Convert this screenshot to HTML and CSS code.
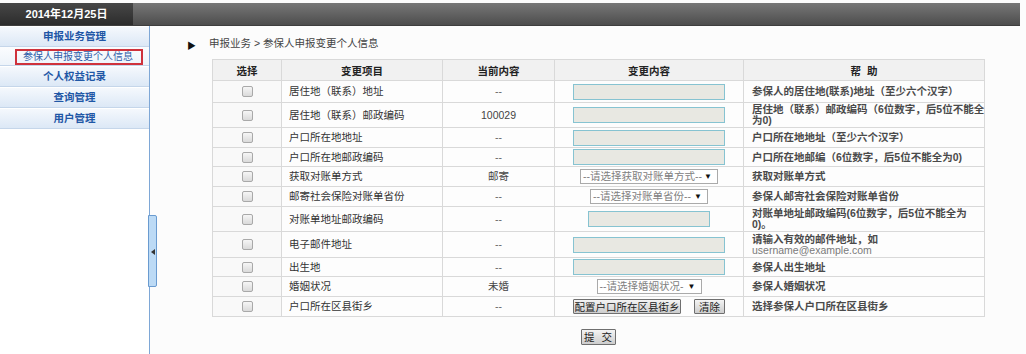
FILE: index.html
```html
<!DOCTYPE html>
<html lang="zh-CN">
<head>
<meta charset="utf-8">
<title>参保人申报变更个人信息</title>
<link rel="stylesheet" href="styles.css">
</head>
<body>
<div class="topbar">
  <div class="date">2014年12月25日</div>
  <div class="topfill"></div>
</div>
<div class="layout">
  <aside class="sidebar">
    <div class="menu-head">申报业务管理</div>
    <div class="menu-sub"><span class="sub-link">参保人申报变更个人信息</span></div>
    <div class="menu-head">个人权益记录</div>
    <div class="menu-head">查询管理</div>
    <div class="menu-head">用户管理</div>
    <div class="toggle"><span class="tri"></span></div>
  </aside>
  <main class="main">
    <div class="crumb"><span class="crumb-arrow">▶</span><span>申报业务 &gt; 参保人申报变更个人信息</span></div>
    <table class="grid">
      <colgroup>
        <col class="c1"><col class="c2"><col class="c3"><col class="c4"><col class="c5">
      </colgroup>
      <thead>
        <tr><th>选择</th><th>变更项目</th><th>当前内容</th><th>变更内容</th><th>帮&nbsp;&nbsp;助</th></tr>
      </thead>
      <tbody>
        <tr class="r22"><td class="chk"><input type="checkbox"></td><td class="item">居住地（联系）地址</td><td class="cur">--</td><td class="edit"><input class="txt" type="text"></td><td class="help">参保人的居住地(联系)地址（至少六个汉字）</td></tr>
        <tr class="r25"><td class="chk"><input type="checkbox"></td><td class="item">居住地（联系）邮政编码</td><td class="cur num">100029</td><td class="edit"><input class="txt" type="text"></td><td class="help">居住地（联系）邮政编码（6位数字，后5位不能全<br>为0)</td></tr>
        <tr><td class="chk"><input type="checkbox"></td><td class="item">户口所在地地址</td><td class="cur">--</td><td class="edit"><input class="txt" type="text"></td><td class="help">户口所在地地址（至少六个汉字）</td></tr>
        <tr class="r19"><td class="chk"><input type="checkbox"></td><td class="item">户口所在地邮政编码</td><td class="cur">--</td><td class="edit"><input class="txt" type="text"></td><td class="help">户口所在地邮编（6位数字，后5位不能全为0)</td></tr>
        <tr><td class="chk"><input type="checkbox"></td><td class="item">获取对账单方式</td><td class="cur num">邮寄</td><td class="edit"><span class="sel w1">--请选择获取对账单方式--<span class="arr">▼</span></span></td><td class="help">获取对账单方式</td></tr>
        <tr><td class="chk"><input type="checkbox"></td><td class="item">邮寄社会保险对账单省份</td><td class="cur">--</td><td class="edit"><span class="sel w2">--请选择对账单省份--<span class="arr">▼</span></span></td><td class="help">参保人邮寄社会保险对账单省份</td></tr>
        <tr class="r25"><td class="chk"><input type="checkbox"></td><td class="item">对账单地址邮政编码</td><td class="cur">--</td><td class="edit"><input class="txt short" type="text"></td><td class="help">对账单地址邮政编码(6位数字，后5位不能全为<br>0)。</td></tr>
        <tr class="r26"><td class="chk"><input type="checkbox"></td><td class="item">电子邮件地址</td><td class="cur">--</td><td class="edit"><input class="txt" type="text"></td><td class="help">请输入有效的邮件地址，如<br><span class="mail">username@example.com</span></td></tr>
        <tr class="r19"><td class="chk"><input type="checkbox"></td><td class="item">出生地</td><td class="cur">--</td><td class="edit"><input class="txt" type="text"></td><td class="help">参保人出生地址</td></tr>
        <tr><td class="chk"><input type="checkbox"></td><td class="item">婚姻状况</td><td class="cur num">未婚</td><td class="edit"><span class="sel w3">--请选择婚姻状况-<span class="arr">▼</span></span></td><td class="help">参保人婚姻状况</td></tr>
        <tr><td class="chk"><input type="checkbox"></td><td class="item">户口所在区县街乡</td><td class="cur">--</td><td class="edit"><span class="btns"><button class="btn b-cfg" type="button">配置户口所在区县街乡</button><button class="btn b-clr" type="button">清除</button></span></td><td class="help">选择参保人户口所在区县街乡</td></tr>
      </tbody>
    </table>
    <div class="submit-row"><button class="btn b-sub" type="button">提 交</button></div>
  </main>
</div>
</body>
</html>
```

FILE: styles.css
```css
* { box-sizing: border-box; }
html, body { margin: 0; padding: 0; }
body {
  width: 1026px;
  height: 354px;
  overflow: hidden;
  background: #fcfcfc;
  font-family: "Liberation Sans", "Noto Sans CJK SC", sans-serif;
  font-size: 10.5px;
  color: #333;
}

.topbar {
  margin-top: 3px;
  width: 1020px;
  height: 23px;
  display: flex;
  border-bottom: 1px solid #3e3e3e;
}
.date {
  width: 133px;
  background: linear-gradient(#474747, #2c2c2c);
  color: #fff;
  font-weight: bold;
  font-size: 11px;
  line-height: 22px;
  text-align: center;
}
.topfill {
  flex: 1;
  background: linear-gradient(#777777, #4d4d4d);
}

.layout {
  display: flex;
  height: 328px;
}
.sidebar {
  position: relative;
  width: 150px;
  flex: none;
  background: #fff;
  border-right: 1px solid #7ea7d6;
}
.menu-head {
  height: 21px;
  line-height: 20px;
  text-align: center;
  font-weight: bold;
  font-size: 10.5px;
  color: #1f57a6;
  background: linear-gradient(#f6f9fd, #dce8f6);
  border-bottom: 1px solid #c5d6ea;
  box-shadow: inset 0 1px 0 #ffffff;
}
.menu-sub {
  height: 19px;
  padding-top: 2px;
  background: linear-gradient(#fbfcfe, #edf3fa);
  border-bottom: 1px solid #c5d6ea;
}
.sub-link {
  display: block;
  margin-left: 15px;
  width: 128px;
  height: 16px;
  border: 2px solid #cf323c;
  padding-left: 6px;
  line-height: 12px;
  font-size: 10px;
  color: #2f5da8;
  white-space: nowrap;
}
.toggle {
  position: absolute;
  left: 148px;
  top: 189px;
  width: 9px;
  height: 72px;
  background: #bcdaf5;
  border: 1px solid #6a9bd0;
  border-radius: 0 2px 2px 0;
}
.tri {
  position: absolute;
  left: 2px;
  top: 33px;
  width: 0;
  height: 0;
  border-top: 3px solid transparent;
  border-bottom: 3px solid transparent;
  border-right: 4px solid #333;
}

.main {
  flex: 1;
  padding: 10px 0 0 37px;
}
.crumb {
  height: 14px;
  line-height: 14px;
  display: flex;
  align-items: center;
  color: #444;
  white-space: nowrap;
}
.crumb-arrow {
  font-size: 9px;
  color: #111;
  width: 22px;
  position: relative;
  top: 3px;
}

.grid {
  margin: 9px 0 0 25px;
  width: 772px;
  table-layout: fixed;
  border-collapse: collapse;
  background: #fdfdfd;
  border: 1px solid #d6d6d6;
}
.c1 { width: 69px; }
.c2 { width: 161px; }
.c3 { width: 112px; }
.c4 { width: 189px; }
.c5 { width: 241px; }
.grid th, .grid td {
  border: 1px solid #d9d9d9;
  padding: 0;
  white-space: nowrap;
  vertical-align: middle;
}
.grid th {
  height: 21px;
  background: #f1f1f1;
  font-weight: bold;
  color: #222;
  text-align: center;
}
.grid tbody tr { height: 20px; }
.grid tbody tr.r19 { height: 19px; }
.grid tbody tr.r22 { height: 22px; }
.grid tbody tr.r25 { height: 25px; }
.grid tbody tr.r26 { height: 26px; }
.grid td { line-height: 11px; }
.chk { text-align: center; background: #f9f9f9; }
.chk input {
  -webkit-appearance: none;
  appearance: none;
  display: block;
  margin: 0 auto;
  width: 11px;
  height: 11px;
  border: 1px solid #a9a9a9;
  border-radius: 2px;
  background: linear-gradient(#f6f6f6, #dadada);
}
.item { padding-left: 7px !important; color: #333; }
.cur { text-align: center; color: #666; }
.cur.num { color: #444; }
.edit { text-align: center; }
.help {
  padding-left: 8px !important;
  font-weight: bold;
  color: #4a4a4a;
}
.mail {
  font-weight: normal;
  color: #7a7a7a;
}

.txt {
  display: block;
  margin: 0 auto;
  width: 152px;
  height: 16px;
  border: 1px solid #86c3d1;
  background: #e8e8e2;
  padding: 0;
  outline: none;
}
.txt.short { width: 122px; }

.sel {
  display: inline-flex;
  align-items: center;
  justify-content: space-between;
  height: 15px;
  border: 1px solid #aaaaaa;
  background: #fff;
  color: #808080;
  padding: 0 5px 0 2px;
  vertical-align: middle;
  line-height: 13px;
}
.sel.w1 { width: 138px; }
.sel.w2 { width: 118px; }
.sel.w3 { width: 105px; }
.arr {
  color: #111;
  font-size: 8px;
}

.btns {
  display: flex;
  justify-content: center;
  gap: 13px;
}
.btn {
  font-family: "Liberation Sans", "Noto Sans CJK SC", sans-serif;
  font-size: 10.5px;
  color: #222;
  height: 15px;
  padding: 0;
  line-height: 12px;
  border: 1px solid #6f6f6f;
  border-radius: 1px;
  background: linear-gradient(#f4f4f4, #cdcdcd);
}
.b-cfg { width: 108px; }
.b-clr { width: 31px; }
.submit-row {
  width: 772px;
  margin-left: 25px;
  padding-top: 12px;
  display: flex;
  justify-content: center;
}
.b-sub {
  width: 35px;
  height: 16px;
  letter-spacing: 2px;
  padding-left: 2px;
}
```
